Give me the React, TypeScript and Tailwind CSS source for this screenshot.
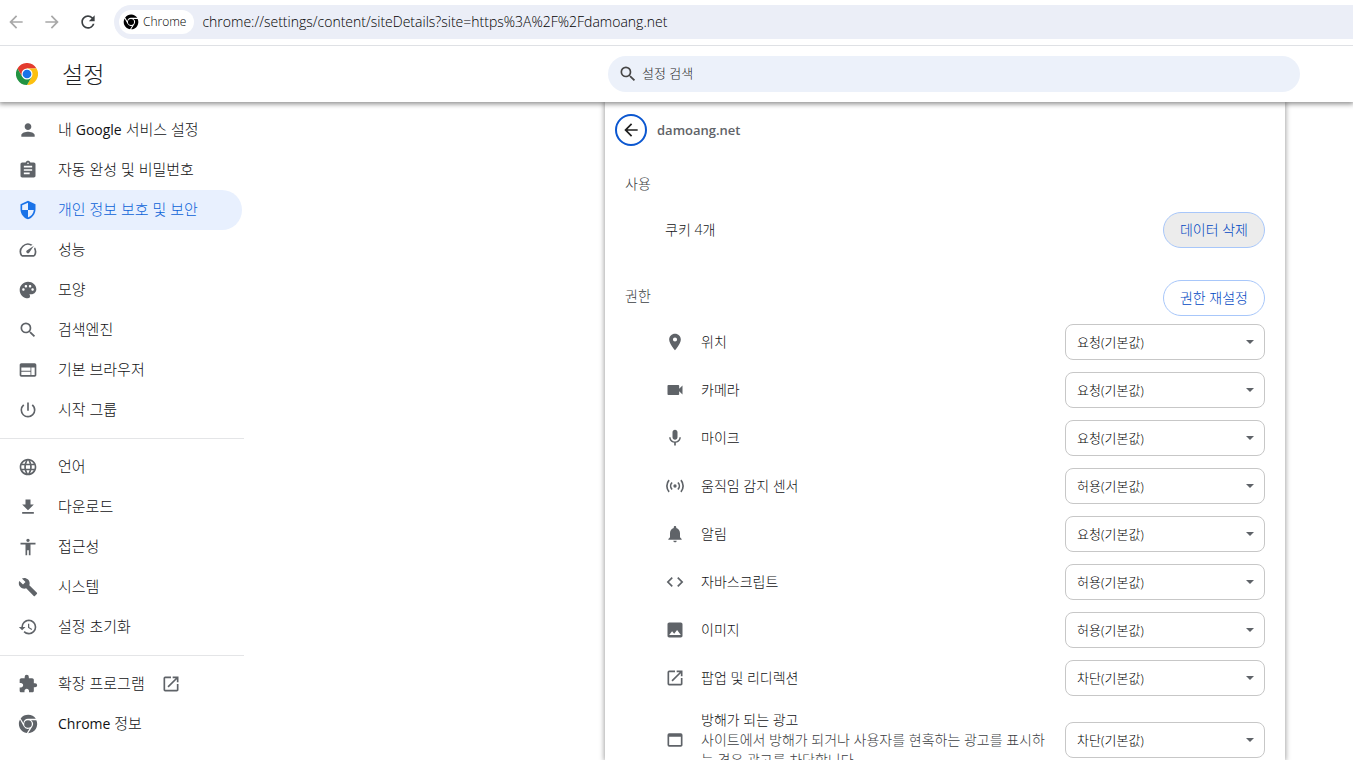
import { useState } from "react";
import type { ReactNode } from "react";
import type { IconType } from "react-icons";
import {
  MdAccessibility,
  MdArrowBack,
  MdAssignment,
  MdBuild,
  MdCode,
  MdExtension,
  MdFileDownload,
  MdHistory,
  MdImage,
  MdLanguage,
  MdLocationOn,
  MdMic,
  MdNotifications,
  MdOpenInNew,
  MdPalette,
  MdPerson,
  MdPowerSettingsNew,
  MdRefresh,
  MdSearch,
  MdSecurity,
  MdSpeed,
  MdVideocam,
  MdWeb,
  MdWebAsset,
} from "react-icons/md";

type IconProps = { className?: string };

function ChromeMono({ className }: IconProps) {
  return (
    <svg viewBox="0 0 24 24" className={className} fill="currentColor" aria-hidden="true">
      <circle cx="12" cy="12" r="4.6" />
      <path d="M12 5.8h9.4A11 11 0 0 0 3.2 5.4l3.4 5.6A5.6 5.6 0 0 1 12 5.8z" />
      <path d="M2.4 6.7A11 11 0 0 0 10.6 22.9l3.2-5.4a5.8 5.8 0 0 1-7-2.7z" />
      <path d="M12.2 23A11 11 0 0 0 22 7.4h-6.2a5.9 5.9 0 0 1 1.4 7.5z" />
    </svg>
  );
}

function ChromeLogo({ className }: IconProps) {
  return (
    <svg viewBox="0 0 48 48" className={className} aria-hidden="true">
      <path d="M24 12h20.8A24 24 0 0 0 3.2 12l10.4 18z" fill="#e33b2e" />
      <path d="M34.4 30L24 48A24 24 0 0 0 44.8 12H24z" fill="#fcc010" />
      <path d="M13.6 30L3.2 12A24 24 0 0 0 24 48l10.4-18z" fill="#229342" />
      <circle cx="24" cy="24" r="12" fill="#fff" />
      <circle cx="24" cy="24" r="9.5" fill="#1a73e8" />
    </svg>
  );
}

function MotionSensor({ className }: IconProps) {
  return (
    <svg
      viewBox="0 0 24 24"
      className={className}
      fill="none"
      stroke="currentColor"
      strokeWidth="2"
      aria-hidden="true"
    >
      <circle cx="12" cy="12" r="2" fill="currentColor" stroke="none" />
      <path d="M8.5 7.8a6 6 0 0 0 0 8.4M15.5 7.8a6 6 0 0 1 0 8.4" />
      <path d="M4.9 5a10.6 10.6 0 0 0 0 14M19.1 5a10.6 10.6 0 0 1 0 14" />
    </svg>
  );
}

type Icon = IconType | typeof ChromeMono;

type NavItem = {
  icon: Icon;
  label: ReactNode;
  active?: boolean;
  external?: boolean;
};

const navGroups: NavItem[][] = [
  [
    { icon: MdPerson, label: <>내 <span className="text-sm font-medium">Google</span> 서비스 설정</> },
    { icon: MdAssignment, label: "자동 완성 및 비밀번호" },
    { icon: MdSecurity, label: "개인 정보 보호 및 보안", active: true },
    { icon: MdSpeed, label: "성능" },
    { icon: MdPalette, label: "모양" },
    { icon: MdSearch, label: "검색엔진" },
    { icon: MdWeb, label: "기본 브라우저" },
    { icon: MdPowerSettingsNew, label: "시작 그룹" },
  ],
  [
    { icon: MdLanguage, label: "언어" },
    { icon: MdFileDownload, label: "다운로드" },
    { icon: MdAccessibility, label: "접근성" },
    { icon: MdBuild, label: "시스템" },
    { icon: MdHistory, label: "설정 초기화" },
  ],
  [
    { icon: MdExtension, label: "확장 프로그램", external: true },
    { icon: ChromeMono, label: <><span className="text-sm font-medium">Chrome</span> 정보</> },
  ],
];

type Permission = {
  id: string;
  icon: Icon;
  label: string;
  value: string;
  description?: string;
};

const permissions: Permission[] = [
  { id: "location", icon: MdLocationOn, label: "위치", value: "요청" },
  { id: "camera", icon: MdVideocam, label: "카메라", value: "요청" },
  { id: "mic", icon: MdMic, label: "마이크", value: "요청" },
  { id: "sensors", icon: MotionSensor, label: "움직임 감지 센서", value: "허용" },
  { id: "notifications", icon: MdNotifications, label: "알림", value: "요청" },
  { id: "javascript", icon: MdCode, label: "자바스크립트", value: "허용" },
  { id: "images", icon: MdImage, label: "이미지", value: "허용" },
  { id: "popups", icon: MdOpenInNew, label: "팝업 및 리디렉션", value: "차단" },
  {
    id: "ads",
    icon: MdWebAsset,
    label: "방해가 되는 광고",
    value: "차단",
    description: "사이트에서 방해가 되거나 사용자를 현혹하는 광고를 표시하는 경우 광고를 차단합니다.",
  },
];

const options = ["요청", "허용", "차단"];

function Toolbar() {
  return (
    <div className="z-20 flex h-[46px] shrink-0 items-center border-b border-[#dfe1e5] bg-white pb-px">
      <div className="flex w-[114px] shrink-0 items-center gap-4 pl-1.5">
        <button type="button" aria-label="뒤로" className="text-[#a8a8a8]">
          <MdArrowBack className="size-5" />
        </button>
        <button type="button" aria-label="앞으로" className="text-[#a8a8a8]">
          <MdArrowBack className="size-5 rotate-180" />
        </button>
        <button type="button" aria-label="새로고침" className="text-[#3c4043]">
          <MdRefresh className="size-5" />
        </button>
      </div>
      <div className="flex h-[34px] flex-1 items-center gap-2 rounded-l-full bg-[#ebeef7] pl-[5px]">
        <span className="flex h-6 items-center gap-1 rounded-full bg-white pr-2 pl-1 text-xs text-black">
          <ChromeMono className="size-4" />
          Chrome
        </span>
        <input
          aria-label="주소창"
          className="min-w-0 flex-1 bg-transparent text-sm text-black outline-none"
          defaultValue="chrome://settings/content/siteDetails?site=https%3A%2F%2Fdamoang.net"
        />
      </div>
    </div>
  );
}

function Header() {
  return (
    <header className="z-10 flex h-14 shrink-0 items-center justify-between bg-white pr-[53px] pl-4 shadow-[0_1px_5px_1px_rgba(0,0,0,0.45)]">
      <div className="flex items-center gap-6">
        <ChromeLogo className="size-[22px]" />
        <h1 className="text-[23px] text-[#202124]">설정</h1>
      </div>
      <label className="flex h-9 w-full max-w-[692px] items-center gap-1 rounded-full bg-[#ecf1fa] pl-2.5 text-[#474747]">
        <MdSearch className="size-5" />
        <input
          type="text"
          aria-label="설정 검색"
          placeholder="설정 검색"
          className="min-w-0 flex-1 bg-transparent text-[13px] outline-none placeholder:text-[#1f1f1f]"
        />
      </label>
    </header>
  );
}

function Sidebar() {
  return (
    <nav className="w-[244px] shrink-0 pt-2 text-[15px]">
      {navGroups.map((group, index) => (
        <ul key={index} className={index > 0 ? "mt-2 border-t border-[#e4e5e7] pt-2" : ""}>
          {group.map((item, i) => (
            <li key={i} className="pr-0.5">
              <a
                href="#"
                className={
                  item.active
                    ? "flex h-10 items-center rounded-r-full bg-[#e8f0fe] pl-[18px] text-[#0b62d8]"
                    : "flex h-10 items-center pl-[18px] text-[#111214]"
                }
              >
                <item.icon
                  className={
                    item.active ? "mr-5 size-5 text-[#1a73e8]" : "mr-5 size-5 text-[#5f6368]"
                  }
                />
                <span className="pb-0.5">{item.label}</span>
                {item.external && <MdOpenInNew className="ml-4 size-5 text-[#5f6368]" />}
              </a>
            </li>
          ))}
        </ul>
      ))}
    </nav>
  );
}

function PermissionRow({ id, icon: RowIcon, label, value, description }: Permission) {
  const [current, setCurrent] = useState(value);

  return (
    <li
      className={
        description
          ? "flex items-center py-2 pr-5 pl-[60px]"
          : "flex h-12 items-center pr-5 pl-[60px]"
      }
    >
      <RowIcon className="mr-4 size-5 shrink-0 text-[#5f6368]" />
      <div className="mr-3 flex-1 leading-5">
        <label htmlFor={id}>{label}</label>
        {description && <p className="text-[#3c4043]">{description}</p>}
      </div>
      <div className="relative shrink-0">
        <select
          id={id}
          value={current}
          onChange={(e) => setCurrent(e.target.value)}
          className="h-9 w-[200px] appearance-none rounded-lg border border-[#c7c7c7] bg-white pl-[11px] text-[13px] text-black"
        >
          {options.map((option) => (
            <option key={option} value={option}>
              {option === value ? `${option}(기본값)` : option}
            </option>
          ))}
        </select>
        <svg
          viewBox="0 0 8 4"
          className="pointer-events-none absolute top-4 right-[11px] h-1 w-2 fill-[#5f6368]"
          aria-hidden="true"
        >
          <path d="M0 0h8L4 4z" />
        </svg>
      </div>
    </li>
  );
}

function SiteDetails() {
  return (
    <main className="w-full max-w-[680px] bg-white text-sm text-[#111214] shadow-[0_0_5px_1px_rgba(0,0,0,0.35)]">
      <div className="flex h-14 items-center gap-2.5 pl-2.5">
        <button
          type="button"
          aria-label="뒤로"
          className="flex size-8 items-center justify-center rounded-full border-2 border-[#0b57d0] text-[#1f1f1f]"
        >
          <MdArrowBack className="size-5" />
        </button>
        <h2 className="text-[13px] font-semibold text-[#5f6368]">damoang.net</h2>
      </div>

      <h3 className="px-5 pt-4 leading-5 text-[#3c4043]">사용</h3>
      <div className="mt-3 flex h-12 items-center justify-between pr-5 pl-[60px]">
        <span>쿠키 4개</span>
        <button
          type="button"
          className="h-9 rounded-full border border-[#a8c7fa] bg-[#ececec] px-4 text-[#0047c2]"
        >
          데이터 삭제
        </button>
      </div>

      <div className="mt-6 flex h-10 items-center justify-between px-5">
        <h3 className="pb-1 text-[#3c4043]">권한</h3>
        <button
          type="button"
          className="h-9 rounded-full border border-[#a8c7fa] px-4 text-[#0047c2]"
        >
          권한 재설정
        </button>
      </div>
      <ul>
        {permissions.map((permission) => (
          <PermissionRow key={permission.id} {...permission} />
        ))}
      </ul>
    </main>
  );
}

export default function App() {
  return (
    <div className="flex h-screen flex-col overflow-hidden bg-white font-['Open_Sans','Noto_Sans_CJK_KR',sans-serif] font-light">
      <Toolbar />
      <Header />
      <div className="flex min-h-0 flex-1 justify-between overflow-hidden pr-[68px]">
        <Sidebar />
        <SiteDetails />
      </div>
    </div>
  );
}
